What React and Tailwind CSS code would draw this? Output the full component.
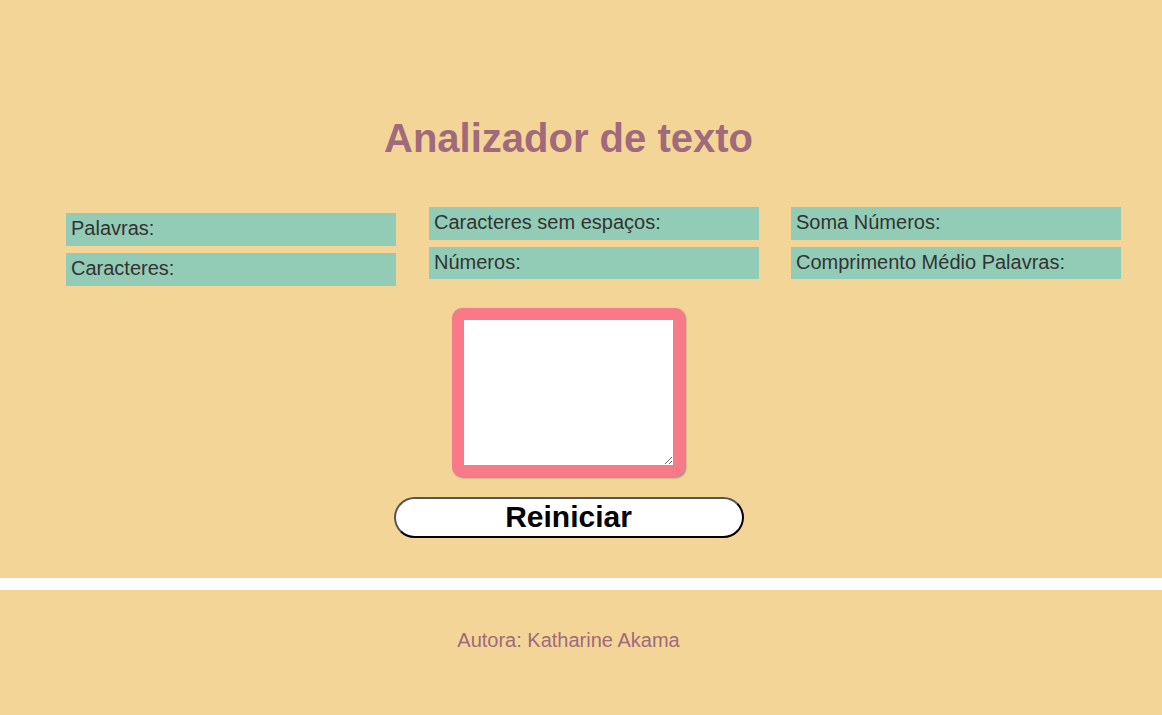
import React from "react";

const Stat = ({ label }) => (
    <p className="h-[32.5px] w-[330px] bg-[#92cbb6] pl-[5px] pt-[4px] text-[20px] leading-[23px] text-[#333]">
        {label}
    </p>
);

const App = () => {
    return (
        <div className="min-h-[715px] bg-[#f3d597] font-['Liberation_Sans',Arial,sans-serif]">
            <main className="h-[578px] pt-[115px]">
                <div className="w-[1137px]">
                    <h1 className="text-center text-[40px] font-bold leading-[46px] text-[#a06a7c]">
                        Analizador de texto
                    </h1>
                </div>

                <div className="mt-[46px] flex items-start pl-[66px]">
                    <div className="mt-[6px] flex flex-col gap-[7.5px]">
                        <Stat label="Palavras:" />
                        <Stat label="Caracteres:" />
                    </div>
                    <div className="ml-[33px] flex flex-col gap-[7px]">
                        <Stat label="Caracteres sem espaços:" />
                        <Stat label="Números:" />
                    </div>
                    <div className="ml-[32px] flex flex-col gap-[7px]">
                        <Stat label="Soma Números:" />
                        <Stat label="Comprimento Médio Palavras:" />
                    </div>
                </div>

                <div className="flex w-[1137px] flex-col items-center">
                    <textarea
                        className="mt-[22px] block h-[169px] w-[233px] rounded-[10px] border-[12px] border-[#f87a88] bg-white shadow-[1px_1px_2px_#8a8a8a] outline-none"
                    />
                    <button className="mt-[20px] h-[41px] w-[350px] rounded-full border-2 border-t-[#555] border-l-[#555] border-b-black border-r-black bg-white text-[30px] font-bold leading-[34px] text-black">
                        Reiniciar
                    </button>
                </div>
            </main>

            <div className="h-[12px] bg-white"></div>

            <footer className="h-[125px] pt-[39px]">
                <p className="w-[1137px] text-center text-[20px] leading-[23px] text-[#a06a7c]">
                    Autora: Katharine Akama
                </p>
            </footer>
        </div>
    );
};

export default App;
